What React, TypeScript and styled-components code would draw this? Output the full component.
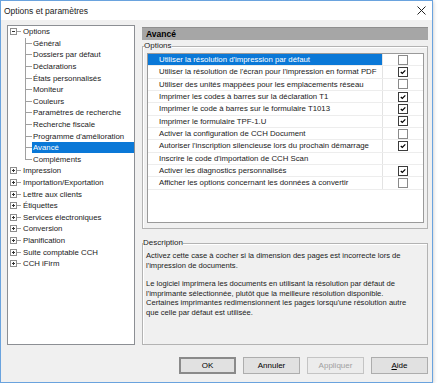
import styled, { createGlobalStyle } from "styled-components";

const GlobalStyle = createGlobalStyle`
  html, body {
    margin: 0;
    background: #ffffff;
  }
  body {
    font-family: "Liberation Sans", Arial, sans-serif;
    font-size: 8px;
    color: #000000;
  }
`;

const optionChildren = [
  "Général",
  "Dossiers par défaut",
  "Déclarations",
  "États personnalisés",
  "Moniteur",
  "Couleurs",
  "Paramètres de recherche",
  "Recherche fiscale",
  "Programme d'amélioration",
  "Avancé",
  "Compléments",
];

const topLevel = [
  "Impression",
  "Importation/Exportation",
  "Lettre aux clients",
  "Étiquettes",
  "Services électroniques",
  "Conversion",
  "Planification",
  "Suite comptable CCH",
  "CCH iFirm",
];

type CheckState = "on" | "off" | "none";

const settings: { label: string; check: CheckState }[] = [
  { label: "Utiliser la résolution d'impression par défaut", check: "off" },
  { label: "Utiliser la résolution de l'écran pour l'impression en format PDF", check: "on" },
  { label: "Utiliser des unités mappées pour les emplacements réseau", check: "off" },
  { label: "Imprimer les codes à barres sur la déclaration T1", check: "on" },
  { label: "Imprimer le code à barres sur le formulaire T1013", check: "on" },
  { label: "Imprimer le formulaire TPF-1.U", check: "on" },
  { label: "Activer la configuration de CCH Document", check: "off" },
  { label: "Autoriser l'inscription silencieuse lors du prochain démarrage", check: "on" },
  { label: "Inscrire le code d'importation de CCH Scan", check: "none" },
  { label: "Activer les diagnostics personnalisés", check: "on" },
  { label: "Afficher les options concernant les données à convertir", check: "off" },
];

const Expander = ({ open }: { open: boolean }) => (
  <ExpBox>
    <svg width="7" height="7" viewBox="0 0 7 7">
      <rect x="0.5" y="0.5" width="6" height="6" fill="#fff" stroke="#8e8e8e" />
      <line x1="2" y1="3.5" x2="5" y2="3.5" stroke="#333" />
      {!open && <line x1="3.5" y1="2" x2="3.5" y2="5" stroke="#333" />}
    </svg>
  </ExpBox>
);

const CheckBox = ({ state }: { state: CheckState }) => {
  if (state === "none") return null;
  return (
    <svg width="10" height="10" viewBox="0 0 10 10">
      <rect x="0.5" y="0.5" width="9" height="9" fill="#fff" stroke={state === "on" ? "#3c3c3c" : "#8a8a8a"} />
      {state === "on" && (
        <path d="M2.8 5 L4.3 6.5 L7.3 3.3" fill="none" stroke="#000" strokeWidth="1.2" />
      )}
    </svg>
  );
};

export default function App() {
  return (
    <>
      <GlobalStyle />
      <Window>
        <TitleBar>
          <Title>Options et paramètres</Title>
          <svg width="9" height="9" viewBox="0 0 9 9">
            <path d="M0.5 0.5 L8.5 8.5 M8.5 0.5 L0.5 8.5" stroke="#222" strokeWidth="1" />
          </svg>
        </TitleBar>
        <Body>
          <Main>
            <Tree>
              <TreeRow>
                <Expander open />
                <Stub />
                <TreeLabel>Options</TreeLabel>
              </TreeRow>
              {optionChildren.map((name, i) => (
                <TreeRow key={name}>
                  <Branch $last={i === optionChildren.length - 1} />
                  <TreeLabel $selected={name === "Avancé"}>{name}</TreeLabel>
                </TreeRow>
              ))}
              {topLevel.map((name) => (
                <TreeRow key={name}>
                  <Expander open={false} />
                  <Stub />
                  <TreeLabel>{name}</TreeLabel>
                </TreeRow>
              ))}
            </Tree>
            <RightPane>
              <PageHeader>Avancé</PageHeader>
              <Group>
                <Legend>Options</Legend>
                <ListBox>
                  {settings.map((s, i) => (
                    <ListRow key={s.label}>
                      <ListText $selected={i === 0}>{s.label}</ListText>
                      <CheckCell>
                        <CheckBox state={s.check} />
                      </CheckCell>
                    </ListRow>
                  ))}
                </ListBox>
              </Group>
              <DescGroup>
                <Legend>Description</Legend>
                <DescText>
                  Activez cette case à cocher si la dimension des pages est incorrecte lors de
                  <br />
                  l'impression de documents.
                </DescText>
                <DescText>
                  Le logiciel imprimera les documents en utilisant la résolution par défaut de
                  <br />
                  l'imprimante sélectionnée, plutôt que la meilleure résolution disponible.
                  <br />
                  Certaines imprimantes redimensionnent les pages lorsqu'une résolution autre
                  <br />
                  que celle par défaut est utilisée.
                </DescText>
              </DescGroup>
            </RightPane>
          </Main>
          <ButtonRow>
            <DialogButton $default>OK</DialogButton>
            <DialogButton>Annuler</DialogButton>
            <DialogButton disabled>Appliquer</DialogButton>
            <DialogButton>
              <u>A</u>ide
            </DialogButton>
          </ButtonRow>
        </Body>
      </Window>
    </>
  );
}

const Window = styled.div`
  width: 433px;
  height: 383px;
  box-sizing: border-box;
  border: 1px solid #6aa3de;
  box-shadow: 0 1px 4px rgba(0, 0, 0, 0.25);
  display: flex;
  flex-direction: column;
  background: #ffffff;
`;

const TitleBar = styled.div`
  height: 19px;
  display: flex;
  align-items: center;
  justify-content: space-between;
  padding: 0 6px 0 3px;
`;

const Title = styled.span`
  font-size: 8.5px;
  color: #1a1a1a;
`;

const Body = styled.div`
  flex: 1;
  background: #f0f0f0;
  padding: 5px 4px 0 6px;
  display: flex;
  flex-direction: column;
`;

const Main = styled.div`
  display: flex;
  gap: 7px;
  height: 320px;
`;

const Tree = styled.div`
  width: 128px;
  box-sizing: border-box;
  background: #ffffff;
  border: 1px solid #8c8f94;
  padding-left: 1px;
`;

const TreeRow = styled.div`
  display: flex;
  align-items: center;
  height: 11.6px;
  white-space: nowrap;
`;

const ExpBox = styled.span`
  display: flex;
  margin-left: 1px;
`;

const Stub = styled.span`
  width: 4px;
  height: 1px;
  background: #a0a0a0;
  margin-right: 1px;
`;

const Branch = styled.span<{ $last: boolean }>`
  align-self: stretch;
  width: 7px;
  margin-left: 16px;
  background:
    linear-gradient(#a0a0a0, #a0a0a0) left top / 1px ${(p) => (p.$last ? "50%" : "100%")} no-repeat,
    linear-gradient(#a0a0a0, #a0a0a0) left center / 100% 1px no-repeat;
`;

const TreeLabel = styled.span<{ $selected?: boolean }>`
  font-size: 7.8px;
  line-height: 11px;
  padding: 0 1px;
  flex: ${(p) => (p.$selected ? 1 : "none")};
  background: ${(p) => (p.$selected ? "#0a78d7" : "transparent")};
  color: ${(p) => (p.$selected ? "#ffffff" : "#1a1a1a")};
`;

const RightPane = styled.div`
  flex: 1;
  display: flex;
  flex-direction: column;
`;

const PageHeader = styled.div`
  margin-top: 2px;
  height: 13px;
  box-sizing: border-box;
  background: #a6a6a6;
  border-top: 1px solid #8f8f8f;
  font-weight: bold;
  font-size: 8.5px;
  line-height: 12px;
  padding-left: 4px;
`;

const Group = styled.fieldset`
  margin: 1px 0 0;
  padding: 2px 3px 5px 4px;
  min-width: 0;
  border: 1px solid #b3b3b3;
  box-shadow: inset 1px 1px 0 #ffffff;
`;

const DescGroup = styled(Group)`
  margin-top: 9px;
  flex: 1;
  padding: 3px 3px 4px 3px;
`;

const Legend = styled.legend`
  padding: 0;
  margin-left: -3px;
  font-size: 8px;
  line-height: 10px;
  color: #1a1a1a;
`;

const ListBox = styled.div`
  height: 170px;
  box-sizing: border-box;
  background: #ffffff;
  border: 1px solid #9a9a9a;
`;

const ListRow = styled.div`
  display: grid;
  grid-template-columns: 1fr 41px;
  height: 12.33px;
  box-sizing: border-box;
  border-bottom: 1px solid #ededed;
`;

const ListText = styled.span<{ $selected: boolean }>`
  font-size: 7.8px;
  line-height: 11px;
  padding-left: 11px;
  white-space: nowrap;
  overflow: hidden;
  background: ${(p) => (p.$selected ? "#0a78d7" : "transparent")};
  color: ${(p) => (p.$selected ? "#ffffff" : "#1a1a1a")};
`;

const CheckCell = styled.span`
  display: flex;
  align-items: center;
  justify-content: center;
  border-left: 1px solid #e3e3e3;
`;

const DescText = styled.p`
  margin: 0 0 9px;
  font-size: 7.6px;
  line-height: 9.5px;
  white-space: nowrap;
  color: #1a1a1a;
`;

const ButtonRow = styled.div`
  display: flex;
  justify-content: flex-end;
  gap: 7px;
  margin-top: 12px;
`;

const DialogButton = styled.button<{ $default?: boolean }>`
  width: 57px;
  height: 17px;
  box-sizing: border-box;
  padding: 0;
  font-family: "Liberation Sans", Arial, sans-serif;
  font-size: 8px;
  color: #000000;
  background: #e1e1e1;
  border: ${(p) => (p.$default ? "2px solid #8a8a8a" : "1px solid #adadad")};
  &:disabled {
    color: #a0a0a0;
    background: #ececec;
    border-color: #c4c4c4;
  }
`;
